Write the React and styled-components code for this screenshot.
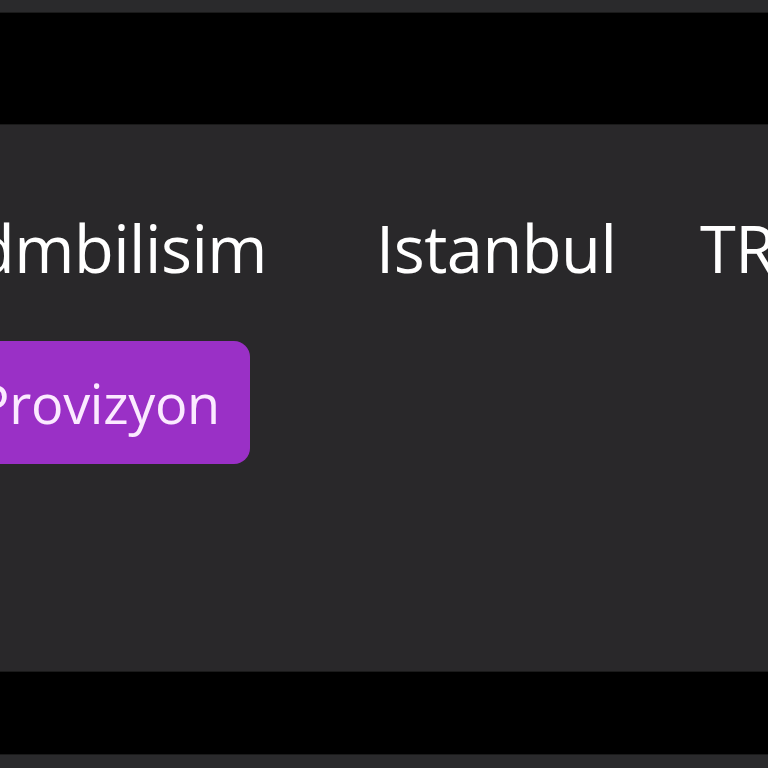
import React from 'react';
import styled, { createGlobalStyle } from 'styled-components';

const Global = createGlobalStyle`
  html, body {
    margin: 0;
    padding: 0;
    background: #2a2a2c;
    overflow: hidden;
  }
`;

const Root = styled.div`
  width: 768px;
  height: 768px;
  display: flex;
  flex-direction: column;
  background: #2a2a2c;
  font-family: "Open Sans", "Noto Sans", sans-serif;
  overflow: hidden;
`;

const Strip = styled.div`
  height: ${p => p.h}px;
  flex-shrink: 0;
  background: #2a2a2c;
`;

const Bar = styled.div`
  height: ${p => p.h}px;
  flex-shrink: 0;
  background: #000;
  border-top: 1px solid #1a1a1a;
  border-bottom: 1px solid #1a1a1a;
  box-sizing: border-box;
`;

const Panel = styled.div`
  height: 546px;
  flex-shrink: 0;
  background: #29282a;
  display: flex;
  flex-direction: column;
  padding: 88px 0 0 0;
  box-sizing: border-box;
  gap: 58px;
`;

const Row = styled.div`
  display: flex;
  align-items: baseline;
  margin-left: -25px;
  white-space: nowrap;
`;

const Cell = styled.div`
  width: ${p => p.w}px;
  flex-shrink: 0;
  color: #ffffff;
  font-size: 65px;
  line-height: 70px;
  letter-spacing: -0.5px;
`;

const Button = styled.div`
  align-self: flex-start;
  margin-left: -83px;
  height: 123px;
  padding: 0 30px 0 60px;
  display: flex;
  align-items: center;
  background: #9a30c6;
  border-radius: 16px;
  color: #fbeaff;
  font-size: 54px;
  letter-spacing: -0.3px;
  white-space: nowrap;
`;

export default function App() {
  return (
    <Root>
      <Global />
      <Strip h={12} />
      <Bar h={113} />
      <Panel>
        <Row>
          <Cell w={401}>dmbilisim</Cell>
          <Cell w={324}>Istanbul</Cell>
          <Cell w={120}>TR</Cell>
        </Row>
        <Button>Provizyon</Button>
      </Panel>
      <Bar h={84} />
      <Strip h={13} />
    </Root>
  );
}
